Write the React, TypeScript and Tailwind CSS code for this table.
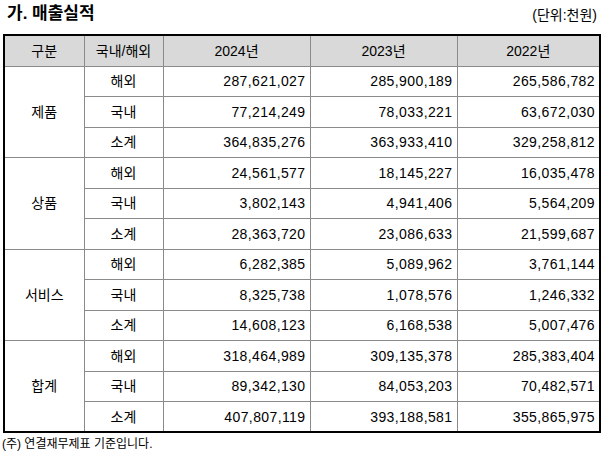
type Row = { kind: string; values: [string, string, string] };

type Group = { name: string; rows: Row[] };

const groups: Group[] = [
  {
    name: "제품",
    rows: [
      { kind: "해외", values: ["287,621,027", "285,900,189", "265,586,782"] },
      { kind: "국내", values: ["77,214,249", "78,033,221", "63,672,030"] },
      { kind: "소계", values: ["364,835,276", "363,933,410", "329,258,812"] },
    ],
  },
  {
    name: "상품",
    rows: [
      { kind: "해외", values: ["24,561,577", "18,145,227", "16,035,478"] },
      { kind: "국내", values: ["3,802,143", "4,941,406", "5,564,209"] },
      { kind: "소계", values: ["28,363,720", "23,086,633", "21,599,687"] },
    ],
  },
  {
    name: "서비스",
    rows: [
      { kind: "해외", values: ["6,282,385", "5,089,962", "3,761,144"] },
      { kind: "국내", values: ["8,325,738", "1,078,576", "1,246,332"] },
      { kind: "소계", values: ["14,608,123", "6,168,538", "5,007,476"] },
    ],
  },
  {
    name: "합계",
    rows: [
      { kind: "해외", values: ["318,464,989", "309,135,378", "285,383,404"] },
      { kind: "국내", values: ["89,342,130", "84,053,203", "70,482,571"] },
      { kind: "소계", values: ["407,807,119", "393,188,581", "355,865,975"] },
    ],
  },
];

const cell = "border border-[#8a8a8a] p-0";

export default function App() {
  return (
    <div
      className="w-[605px] h-[455px] bg-white text-black text-[14px] leading-none"
      style={{ fontFamily: '"Liberation Sans", "Noto Sans CJK KR", sans-serif' }}
    >
      <div className="flex items-end justify-between pl-[7px] pr-[8px] pt-[6px] h-[34px] pb-[12px]">
        <h1 className="text-[17px] font-bold leading-none">가. 매출실적</h1>
        <span className="text-[14px]">(단위:천원)</span>
      </div>

      <table className="ml-[3px] w-[596px] border-collapse border-2 border-black table-fixed">
        <colgroup>
          <col className="w-[80px]" />
          <col className="w-[79px]" />
          <col className="w-[147px]" />
          <col className="w-[147px]" />
          <col className="w-[143px]" />
        </colgroup>
        <thead>
          <tr className="h-[31px] bg-[#d9d9d9]">
            <th className={`${cell} font-normal text-center`}>구분</th>
            <th className={`${cell} font-normal text-center`}>국내/해외</th>
            <th className={`${cell} font-normal text-center`}>2024년</th>
            <th className={`${cell} font-normal text-center`}>2023년</th>
            <th className={`${cell} font-normal text-center`}>2022년</th>
          </tr>
        </thead>
        <tbody>
          {groups.map((g) =>
            g.rows.map((r, i) => (
              <tr key={g.name + r.kind} className="h-[30.5px]">
                {i === 0 && (
                  <td rowSpan={3} className={`${cell} text-center`}>
                    {g.name}
                  </td>
                )}
                <td className={`${cell} text-center`}>{r.kind}</td>
                {r.values.map((v, j) => (
                  <td key={j} className={`${cell} text-right pr-[4px] tracking-[0.4px]`}>
                    {v}
                  </td>
                ))}
              </tr>
            ))
          )}
        </tbody>
      </table>

      <p className="pl-[2px] pt-[5px] text-[12px]">(주) 연결재무제표 기준입니다.</p>
    </div>
  );
}
